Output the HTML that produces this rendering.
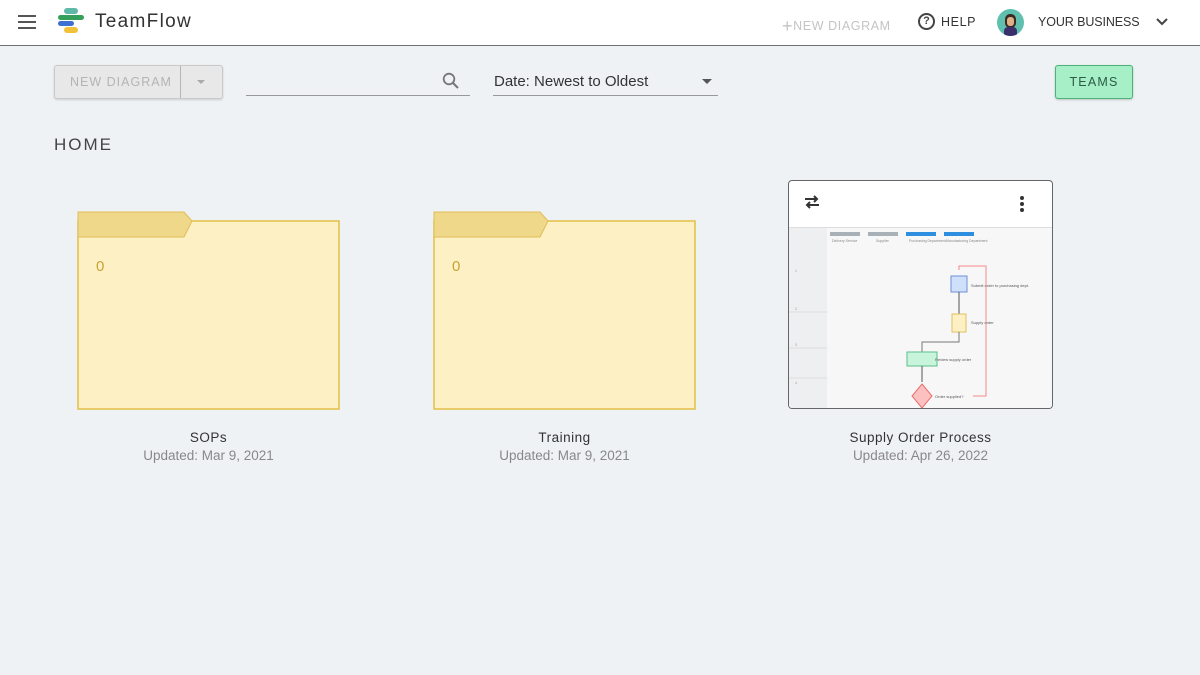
<!DOCTYPE html>
<html><head><meta charset="utf-8"><style>
*{margin:0;padding:0;box-sizing:border-box}
body{width:1200px;height:675px;background:#eef2f5;font-family:"Liberation Sans",sans-serif;position:relative;overflow:hidden}
.a{position:absolute}
.hdr{left:0;top:0;width:1200px;height:46px;background:#fff;border-bottom:1.5px solid #6f6f6f}
.t{white-space:nowrap}
</style></head><body>
<div class="a hdr">
  <div class="a" style="left:18px;top:15px;width:18px;height:2px;background:#555"></div>
  <div class="a" style="left:18px;top:21px;width:18px;height:2px;background:#555"></div>
  <div class="a" style="left:18px;top:27px;width:18px;height:2px;background:#555"></div>
  <div class="a" style="left:64px;top:8px;width:14px;height:6px;border-radius:3px;background:#5fb8a8"></div>
  <div class="a" style="left:58px;top:15px;width:26px;height:5px;border-radius:3px;background:#35a05a"></div>
  <div class="a" style="left:58px;top:21px;width:16px;height:5px;border-radius:3px;background:#3f6fd0"></div>
  <div class="a" style="left:64px;top:27px;width:14px;height:6px;border-radius:3px;background:#f2c13a"></div>
  <div class="a t" style="left:95px;top:11px;font-size:19px;color:#333;letter-spacing:1.3px">TeamFlow</div>
  <div class="a t" style="left:782px;top:14px;font-size:12.5px;color:#c4c4c4;letter-spacing:0.6px"><span style="font-size:18px;position:relative;top:2px">+</span>NEW DIAGRAM</div>
  <div class="a" style="left:918px;top:13px;width:17px;height:17px;border:2px solid #444;border-radius:50%;font-size:11px;font-weight:bold;text-align:center;line-height:13px;color:#444">?</div>
  <div class="a t" style="left:941px;top:15px;font-size:12.5px;color:#333;letter-spacing:0.6px">HELP</div>
  <div class="a" style="left:997px;top:9px;width:27px;height:27px;border-radius:50%;background:#5fc0b0;overflow:hidden">
    <div class="a" style="left:8px;top:5px;width:11px;height:14px;border-radius:5px;background:#3a2a22"></div>
    <div class="a" style="left:10px;top:8px;width:7px;height:9px;border-radius:3px;background:#e0b088"></div>
    <div class="a" style="left:7px;top:18px;width:13px;height:10px;border-radius:4px;background:#3a2f6a"></div>
  </div>
  <div class="a t" style="left:1038px;top:15px;font-size:12.5px;color:#333;letter-spacing:-0.1px">YOUR BUSINESS</div>
  <svg class="a" style="left:1155px;top:15px" width="14" height="14"><path d="M2 4 L7 9 L12 4" stroke="#444" stroke-width="2" fill="none"/></svg>
</div>

<div class="a" style="left:54px;top:65px;width:169px;height:34px;border:1px solid #c9c9c9;border-radius:3px;background:#e8e8e8;box-shadow:0 1px 2px rgba(0,0,0,.15)">
  <div class="a t" style="left:15px;top:9px;font-size:12.5px;color:#b4b4b4;letter-spacing:1px">NEW DIAGRAM</div>
  <div class="a" style="left:125px;top:0;width:1px;height:32px;background:#b5b5b5"></div>
  <div class="a" style="left:142px;top:14px;border-left:4px solid transparent;border-right:4px solid transparent;border-top:4px solid #aaa"></div>
</div>
<div class="a" style="left:246px;top:95px;width:224px;height:1px;background:#999"></div>
<svg class="a" style="left:442px;top:72px" width="18" height="18"><circle cx="7" cy="7" r="5.3" stroke="#777" stroke-width="1.8" fill="none"/><path d="M11 11 L16 16" stroke="#777" stroke-width="2"/></svg>
<div class="a t" style="left:494px;top:73px;font-size:15px;color:#333">Date: Newest to Oldest</div>
<div class="a" style="left:702px;top:79px;border-left:5px solid transparent;border-right:5px solid transparent;border-top:5px solid #555"></div>
<div class="a" style="left:493px;top:95px;width:225px;height:1px;background:#999"></div>
<div class="a" style="left:1055px;top:65px;width:78px;height:34px;background:#a6efc7;border:1px solid #4bb27a;border-radius:3px;box-shadow:0 1px 2px rgba(0,0,0,.2);text-align:center;line-height:32px;font-size:12.5px;letter-spacing:1.2px;color:#2b5b45">TEAMS</div>

<div class="a t" style="left:54px;top:135px;font-size:17px;color:#444;letter-spacing:2px">HOME</div>

<svg class="a" style="left:76px;top:210px" width="266" height="202"><rect x="2" y="11" width="261" height="188" fill="#fdf0c4" stroke="#e4bf45" stroke-width="1.5"/><path d="M2 2 H108 L116 11 L108 27 H2 Z" fill="#f0d88a" stroke="#e0bd55"/></svg>
<div class="a" style="left:96px;top:258px;font-size:15px;color:#c9a232">0</div>
<div class="a t" style="left:78px;width:261px;top:430px;text-align:center;font-size:13.5px;color:#333;letter-spacing:.5px">SOPs</div>
<div class="a t" style="left:78px;width:261px;top:448px;text-align:center;font-size:13.5px;color:#888">Updated: Mar 9, 2021</div>

<svg class="a" style="left:432px;top:210px" width="266" height="202"><rect x="2" y="11" width="261" height="188" fill="#fdf0c4" stroke="#e4bf45" stroke-width="1.5"/><path d="M2 2 H108 L116 11 L108 27 H2 Z" fill="#f0d88a" stroke="#e0bd55"/></svg>
<div class="a" style="left:452px;top:258px;font-size:15px;color:#c9a232">0</div>
<div class="a t" style="left:434px;width:261px;top:430px;text-align:center;font-size:13.5px;color:#333;letter-spacing:.5px">Training</div>
<div class="a t" style="left:434px;width:261px;top:448px;text-align:center;font-size:13.5px;color:#888">Updated: Mar 9, 2021</div>

<div class="a" style="left:788px;top:180px;width:265px;height:229px;background:#fff;border:1px solid #666;border-radius:4px;overflow:hidden">
  <svg class="a" style="left:14px;top:12px" width="18" height="18"><path d="M2 6 H14 M11 3 L14 6 L11 9 M16 12 H4 M7 9 L4 12 L7 15" stroke="#333" stroke-width="2" fill="none"/></svg>
  <div class="a" style="left:231px;top:15px;width:4px;height:4px;border-radius:2px;background:#333"></div>
  <div class="a" style="left:231px;top:21px;width:4px;height:4px;border-radius:2px;background:#333"></div>
  <div class="a" style="left:231px;top:27px;width:4px;height:4px;border-radius:2px;background:#333"></div>
  <div class="a" style="left:0;top:46px;width:265px;height:183px;background:#f7f7f8;border-top:1px solid #ddd">
    <div class="a" style="left:0;top:0;width:38px;height:183px;background:#eeeff1"></div>
    <div class="a" style="left:41px;top:4px;width:30px;height:4px;background:#a8b0b8"></div>
    <div class="a" style="left:79px;top:4px;width:30px;height:4px;background:#a8b0b8"></div>
    <div class="a" style="left:117px;top:4px;width:30px;height:4px;background:#2e8fe0"></div>
    <div class="a" style="left:155px;top:4px;width:30px;height:4px;background:#2e8fe0"></div>
    <svg class="a" style="left:0;top:0" width="265" height="183">
      <g fill="#888" font-size="3.5"><text x="43" y="14">Delivery Service</text><text x="87" y="14">Supplier</text><text x="120" y="14">Purchasing Department</text><text x="157" y="14">Manufacturing Department</text></g>
      <g stroke="#ddd"><path d="M0 84 H38 M0 120 H38 M0 150 H38"/></g>
      <g fill="#999" font-size="3.5"><text x="6" y="44">1</text><text x="6" y="82">2</text><text x="6" y="118">3</text><text x="6" y="156">4</text></g>
      <path d="M170 42 V38 H197 V168 H184" stroke="#f08a8a" fill="none"/>
      <rect x="162" y="48" width="16" height="16" fill="#cfe0fb" stroke="#6f8fd8"/>
      <path d="M170 64 V86" stroke="#555"/>
      <rect x="163" y="86" width="14" height="18" fill="#fdf0c4" stroke="#e0c060"/>
      <path d="M170 104 V114 H133 V124" stroke="#777" fill="none"/>
      <rect x="118" y="124" width="30" height="14" fill="#c9f4dc" stroke="#5cbf8a"/>
      <path d="M133 138 V154" stroke="#555"/>
      <path d="M133 156 L143 168 L133 180 L123 168 Z" fill="#fcc0c0" stroke="#e87070"/>
      <text x="182" y="59" font-size="4" fill="#555">Submit order to purchasing dept.</text>
      <text x="182" y="96" font-size="4" fill="#555">Supply order</text>
      <text x="146" y="133" font-size="4" fill="#555">Review supply order</text>
      <text x="146" y="170" font-size="4" fill="#555">Order supplied?</text>
    </svg>
  </div>
</div>
<div class="a t" style="left:788px;width:265px;top:430px;text-align:center;font-size:13.5px;color:#333;letter-spacing:.5px">Supply Order Process</div>
<div class="a t" style="left:788px;width:265px;top:448px;text-align:center;font-size:13.5px;color:#888">Updated: Apr 26, 2022</div>
</body></html>
